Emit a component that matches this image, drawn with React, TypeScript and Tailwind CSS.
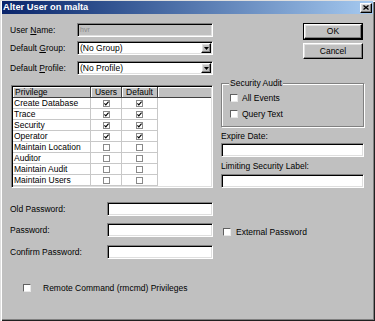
import React from "react";

const sunken =
  "border border-t-[#808080] border-l-[#808080] border-b-white border-r-white shadow-[inset_1px_1px_0_#000,inset_-1px_-1px_0_#dfdfdf]";
const raised =
  "bg-[#c0c0c0] border border-t-white border-l-white border-b-black border-r-black shadow-[inset_-1px_-1px_0_#808080,inset_1px_1px_0_#dfdfdf]";

function Check({ checked }: { checked: boolean }) {
  return (
    <div className="w-[7px] h-[7px] border border-[#8a8a8a] bg-white flex items-center justify-center">
      {checked && (
        <svg width="5" height="5" viewBox="0 0 5 5">
          <path d="M0.4 2.4 L1.8 3.8 L4.6 0.6" stroke="#000" strokeWidth="1.2" fill="none" />
        </svg>
      )}
    </div>
  );
}

function Box() {
  return (
    <div className="w-[8px] h-[8px] bg-white border border-t-[#606060] border-l-[#606060] border-b-[#e8e8e8] border-r-[#e8e8e8] shrink-0" />
  );
}

function Combo({ text }: { text: string }) {
  return (
    <div className={`w-[136px] h-[14px] bg-white ${sunken} flex items-center pl-[2px] pr-[1px]`}>
      <span className="flex-1 leading-none">{text}</span>
      <div className={`w-[10px] h-[10px] ${raised} flex items-center justify-center`}>
        <svg width="5" height="3" viewBox="0 0 5 3">
          <path d="M0 0 H5 L2.5 3 Z" fill="#000" />
        </svg>
      </div>
    </div>
  );
}

const rows: [string, boolean][] = [
  ["Create Database", true],
  ["Trace", true],
  ["Security", true],
  ["Operator", true],
  ["Maintain Location", false],
  ["Auditor", false],
  ["Maintain Audit", false],
  ["Maintain Users", false],
];

export default function App() {
  return (
    <div className="w-[375px] h-[321px] bg-[#c0c0c0] [font-family:'Liberation_Sans',Arial,sans-serif] text-[8.5px] text-black flex flex-col pt-[1px] px-[2px] pb-[2px] shadow-[inset_1px_1px_0_#dfdfdf,inset_2px_2px_0_#fff,inset_-1px_-1px_0_#202020,inset_-2px_-2px_0_#808080] overflow-hidden">
      {/* Title bar */}
      <div className="h-[13px] bg-gradient-to-r from-[#0a246a] to-[#a6caf0] flex items-center justify-between pl-[1px] pr-[1px] shrink-0">
        <span className="text-white font-bold text-[9.3px] leading-none">Alter User on malta</span>
        <div className={`w-[12px] h-[10px] ${raised} flex items-center justify-center`}>
          <svg width="6" height="5" viewBox="0 0 6 5">
            <path d="M0.5 0.5 L5.5 4.5 M5.5 0.5 L0.5 4.5" stroke="#000" strokeWidth="1.3" />
          </svg>
        </div>
      </div>

      {/* Section 1 */}
      <div className="flex mt-[9px]">
        <div className="flex flex-col ml-[8px]">
          <div className="flex items-center h-[14px]">
            <span className="w-[67px]">
              User <u>N</u>ame:
            </span>
            <div className={`w-[136px] h-[14px] bg-[#c0c0c0] ${sunken} flex items-center pl-[2px] text-[#8a8a8a] text-[7px]`}>
              hvr
            </div>
          </div>
          <div className="flex items-center h-[14px] mt-[4px]">
            <span className="w-[67px]">
              Default <u>G</u>roup:
            </span>
            <Combo text="(No Group)" />
          </div>
          <div className="flex items-center h-[14px] mt-[6px]">
            <span className="w-[67px]">
              Default <u>P</u>rofile:
            </span>
            <Combo text="(No Profile)" />
          </div>
        </div>
        <div className="flex flex-col ml-[90px]">
          <div className="w-[60px] h-[17px] border border-black">
            <div className={`w-full h-full ${raised} flex items-center justify-center`}>OK</div>
          </div>
          <div className={`w-[60px] h-[16px] mt-[3px] ${raised} flex items-center justify-center`}>Cancel</div>
        </div>
      </div>

      {/* Section 2 */}
      <div className="flex items-start mt-[8px]">
        <div className={`mt-[2px] ml-[9px] w-[202px] h-[103px] bg-white ${sunken} p-[1px] flex flex-col overflow-hidden`}>
          <div className="flex h-[11px] bg-[#c0c0c0] shrink-0">
            <div className="w-[78px] border-r border-b border-[#404040] shadow-[inset_1px_1px_0_#fff] flex items-center pl-[2px]">
              Privilege
            </div>
            <div className="w-[31px] border-r border-b border-[#404040] shadow-[inset_1px_1px_0_#fff] flex items-center justify-center">
              Users
            </div>
            <div className="w-[36px] border-r border-b border-[#404040] shadow-[inset_1px_1px_0_#fff] flex items-center justify-center">
              Default
            </div>
            <div className="flex-1 border-b border-[#404040] shadow-[inset_1px_1px_0_#fff]" />
          </div>
          {rows.map(([name, c]) => (
            <div key={name} className="flex h-[11px] shrink-0">
              <div className="w-[78px] border-r border-b border-[#c8c8c8] flex items-center pl-[1px]">{name}</div>
              <div className="w-[31px] border-r border-b border-[#c8c8c8] flex items-center justify-center">
                <Check checked={c} />
              </div>
              <div className="w-[36px] border-r border-b border-[#c8c8c8] flex items-center justify-center">
                <Check checked={c} />
              </div>
              <div className="flex-1" />
            </div>
          ))}
        </div>

        <div className="ml-[8px] w-[143px] flex flex-col">
          <div className="relative h-[44px] border border-[#808080] shadow-[1px_1px_0_#fff,inset_1px_1px_0_#fff] flex flex-col pl-[8px] pt-[9px]">
            <span className="absolute -top-[6px] left-[7px] px-[1px] bg-[#c0c0c0] leading-[11px]">Security Audit</span>
            <div className="flex items-center gap-[4px] h-[10px]">
              <Box />
              <span>All Events</span>
            </div>
            <div className="flex items-center gap-[4px] h-[10px] mt-[6px]">
              <Box />
              <span>Query Text</span>
            </div>
          </div>
          <div className="h-[12px] mt-[3px] flex items-center">Expire Date:</div>
          <div className={`h-[14px] mt-[1px] bg-white ${sunken}`} />
          <div className="h-[12px] mt-[3px] flex items-center">Limiting Security Label:</div>
          <div className={`h-[14px] mt-[2px] bg-white ${sunken}`} />
        </div>
      </div>

      {/* Section 3 */}
      <div className="flex flex-col ml-[8px] mt-[14px]">
        <div className="flex items-center h-[14px]">
          <span className="w-[97px]">Old Password:</span>
          <div className={`w-[106px] h-[14px] bg-white ${sunken}`} />
        </div>
        <div className="flex items-center h-[14px] mt-[7px]">
          <span className="w-[97px]">Password:</span>
          <div className={`w-[106px] h-[14px] bg-white ${sunken}`} />
          <div className="flex items-center gap-[5px] ml-[10px] mt-[4px]">
            <Box />
            <span>External Password</span>
          </div>
        </div>
        <div className="flex items-center h-[14px] mt-[8px]">
          <span className="w-[97px]">Confirm Password:</span>
          <div className={`w-[106px] h-[14px] bg-white ${sunken}`} />
        </div>
      </div>

      {/* Section 4 */}
      <div className="flex items-center h-[12px] mt-[23px] ml-[21px] gap-[12px]">
        <Box />
        <span>Remote Command (rmcmd) Privileges</span>
      </div>
    </div>
  );
}
